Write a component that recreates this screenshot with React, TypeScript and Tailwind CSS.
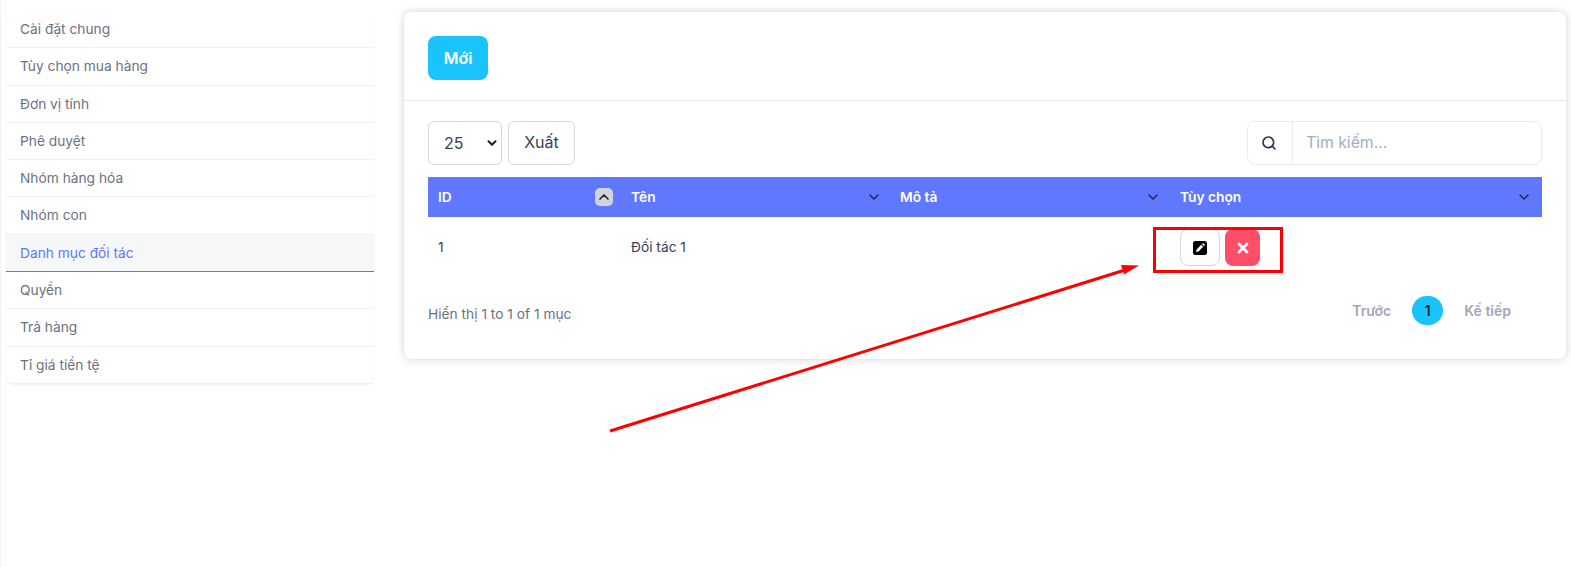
import React from "react";
import { ChevronDown, ChevronUp, Search, X } from "lucide-react";

const menu = [
  { label: "Cài đặt chung", h: "h-[37px]" },
  { label: "Tùy chọn mua hàng", h: "h-[38px]" },
  { label: "Đơn vị tính", h: "h-[37px]" },
  { label: "Phê duyệt", h: "h-[37px]" },
  { label: "Nhóm hàng hóa", h: "h-[37px]" },
  { label: "Nhóm con", h: "h-[38px]" },
  { label: "Danh mục đối tác", h: "h-[37px]", active: true },
  { label: "Quyền", h: "h-[37px]" },
  { label: "Trả hàng", h: "h-[38px]" },
  { label: "Tỉ giá tiền tệ", h: "h-[37px]" },
];

const SortIcon = () => <ChevronDown className="w-4 h-4 text-[#1f2340]" strokeWidth={2} />;

export default function App() {
  return (
    <div className="relative w-[1571px] h-[567px] overflow-hidden bg-white font-['Inter',sans-serif] text-[13.75px] border-l border-[#f3f3f5]">
      <div className="flex items-start pl-[5px] gap-[30px]">
        {/* menu bên trái */}
        <div className="w-[368px] mt-[11px] rounded-lg bg-white shadow-[0_1px_2px_rgba(0,0,0,0.06)]">
          {menu.map((m) => (
            <div
              key={m.label}
              className={`${m.h} flex items-center pl-[14px] border-b ${
                m.active
                  ? "bg-[#f6f7f9] text-[#5f78f5] border-[#5f78f5]"
                  : "text-[#6b7280] border-[#f1f2f4]"
              }`}
            >
              {m.label}
            </div>
          ))}
        </div>

        {/* nội dung chính */}
        <div className="w-[1162px] h-[347px] mt-[12px] rounded-lg bg-white shadow-[0_0_10px_rgba(0,0,0,0.18)]">
          <div className="h-[89px] pt-[24px] pl-[24px] border-b border-[#e5e7eb]">
            <button className="w-[60px] h-[44px] rounded-lg bg-[#1ac3fb] text-white text-[16px] font-semibold">
              Mới
            </button>
          </div>

          <div className="px-[24px] pt-[20px]">
            <div className="flex justify-between w-[1114px]">
              <div className="flex gap-[6px]">
                <div className="w-[74px] h-[44px] pl-[15px] pr-[2px] pb-[1px] flex items-center justify-between rounded-md border border-[#d5d6dc] text-[16px] text-[#374151]">
                  25
                  <ChevronDown className="w-[14px] h-[14px] text-[#222]" strokeWidth={3.5} />
                </div>
                <button className="w-[67px] h-[44px] pb-[2px] rounded-md border border-[#d5d6dc] text-[16px] text-[#374151]">
                  Xuất
                </button>
              </div>
              <div className="w-[295px] h-[44px] flex rounded-lg border border-[#e8ebf0]">
                <div className="w-[45px] pr-[2px] flex items-center justify-center border-r border-[#e8ebf0]">
                  <Search className="w-4 h-4 text-[#27364b]" strokeWidth={2.5} />
                </div>
                <div className="flex items-center pl-[13px] text-[15.75px] text-[#a0aec0]">Tìm kiếm...</div>
              </div>
            </div>

            <table className="mt-[12px] w-[1114px] table-fixed border-collapse">
              <thead>
                <tr className="h-[40px] bg-[#5f78ff] text-white font-semibold text-left">
                  <th className="w-[193px] pl-[10px] pr-[8px] font-semibold">
                    <div className="flex items-center justify-between">
                      ID
                      <span className="w-[18px] h-[18px] flex items-center justify-center rounded-[5px] bg-[#d1d5db]">
                        <ChevronUp className="w-4 h-4 text-[#1f2340]" strokeWidth={2.5} />
                      </span>
                    </div>
                  </th>
                  <th className="w-[269px] pl-[10px] pr-[8px] font-semibold">
                    <div className="flex items-center justify-between">
                      Tên
                      <SortIcon />
                    </div>
                  </th>
                  <th className="w-[280px] pl-[10px] pr-[9px] font-semibold">
                    <div className="flex items-center justify-between">
                      Mô tả
                      <SortIcon />
                    </div>
                  </th>
                  <th className="w-[372px] pl-[10px] pr-[10px] font-semibold">
                    <div className="flex items-center justify-between">
                      Tùy chọn
                      <SortIcon />
                    </div>
                  </th>
                </tr>
              </thead>
              <tbody>
                <tr className="h-[58px] align-top text-[#374151]">
                  <td className="pl-[10px] pt-[20px]">1</td>
                  <td className="pl-[10px] pt-[20px]">Đối tác 1</td>
                  <td />
                  <td className="pl-[10px] pt-[12px]">
                    <div className="flex gap-[5px]">
                      <button className="w-[40px] h-[37px] flex items-center justify-center rounded-lg border border-[#d5d6dc] bg-white">
                        <svg viewBox="0 0 14 14" className="w-[14px] h-[14px]">
                          <rect width="14" height="14" rx="2.5" fill="#000" />
                          <path d="M3 11l.6-2.6 4.6-4.6 2 2-4.6 4.6L3 11zM8.9 3.1l.7-.7a.7.7 0 0 1 1 0l1 1a.7.7 0 0 1 0 1l-.7.7-2-2z" fill="#fff" />
                        </svg>
                      </button>
                      <button className="w-[35px] h-[37px] flex items-center justify-center rounded-lg bg-[#ff4d6a]">
                        <X className="w-4 h-4 text-white" strokeWidth={4} />
                      </button>
                    </div>
                  </td>
                </tr>
              </tbody>
            </table>

            <div className="flex items-center justify-between mt-[21px]">
              <span className="pt-[8px] text-[#6b7280]">Hiển thị 1 to 1 of 1 mục</span>
              <div className="flex items-center pr-[31px] font-semibold text-[14px] text-[#a3a6b8]">
                <span>Trước</span>
                <span className="mx-[21px] w-[31px] h-[29px] flex items-center justify-center rounded-full bg-[#1ac3fb] text-[#1f2340] text-[14px]">
                  1
                </span>
                <span>Kế tiếp</span>
              </div>
            </div>
          </div>
        </div>
      </div>

      {/* chú thích đỏ vẽ đè lên ảnh */}
      <svg className="absolute left-[-1px] top-0 pointer-events-none" width="1571" height="567">
        <rect x="1154.5" y="228.5" width="127" height="43" fill="none" stroke="#ff0000" strokeWidth="3" />
        <line x1="610" y1="431" x2="1125" y2="270" stroke="#ff0000" strokeWidth="3" />
        <polygon points="1139,265.5 1121,265 1124,274.5" fill="#ff0000" />
      </svg>
    </div>
  );
}
